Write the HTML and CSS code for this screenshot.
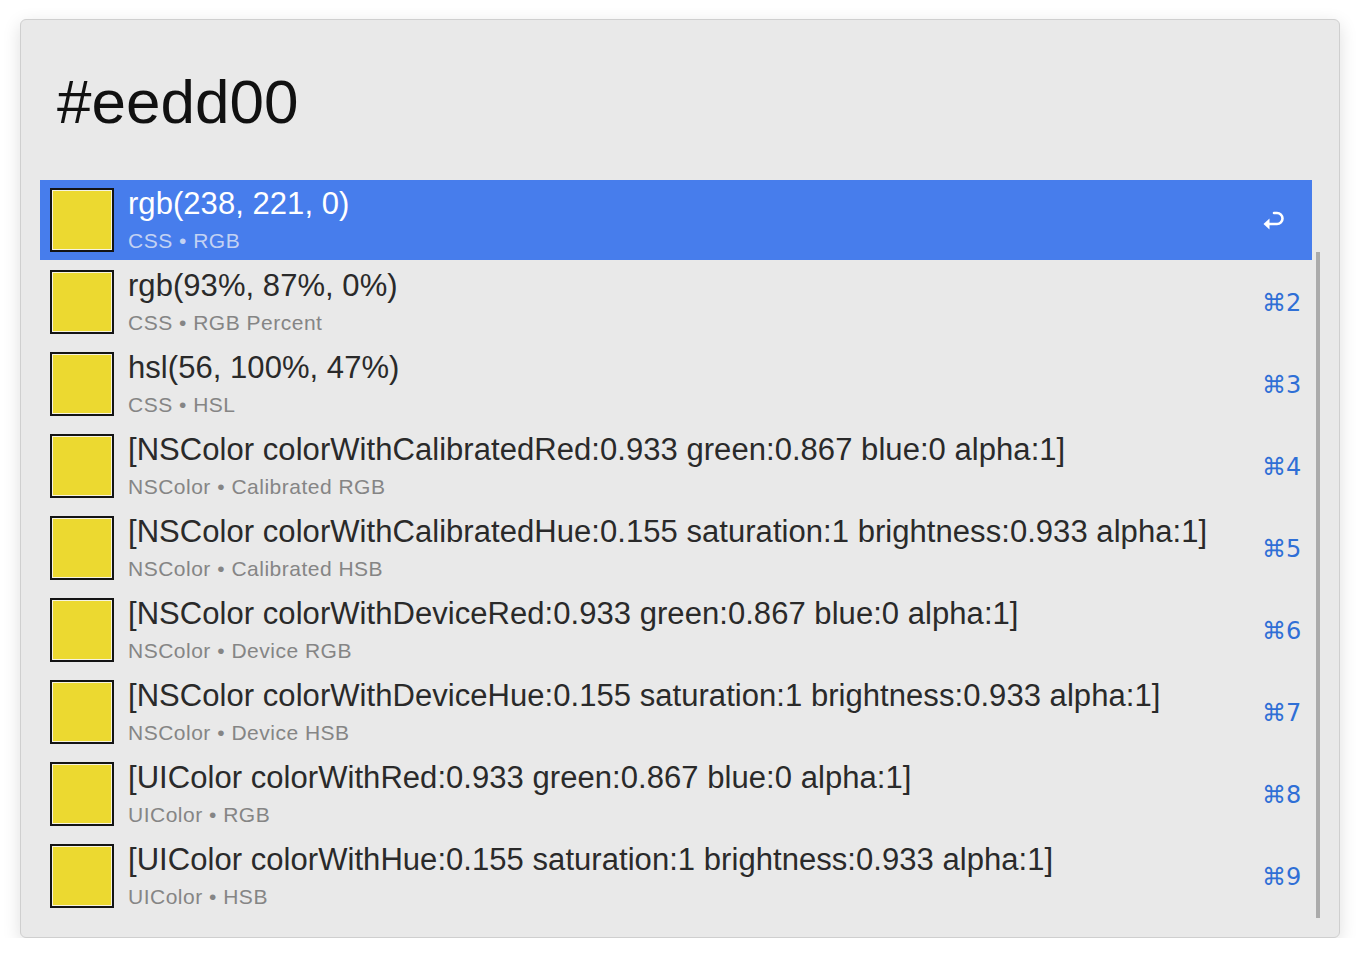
FILE: index.html
```html
<!DOCTYPE html>
<html>
<head>
<meta charset="utf-8">
<link rel="stylesheet" href="styles.css">
</head>
<body>
<div class="window">
  <div class="query">#eedd00</div>
  <div class="list">
    <div class="row selected">
      <div class="swatch"></div>
      <div class="text"><div class="title">rgb(238, 221, 0)</div><div class="sub">CSS • RGB</div></div>
      <div class="key"><svg width="24" height="22" viewBox="0 0 24 22"><path d="M5 15 H15 A5.5 5.5 0 0 0 15 4 H12" fill="none" stroke="#fff" stroke-width="2.6" stroke-linecap="round"/><path d="M1.5 15 L7.5 9.5 L7.5 20.5 Z" fill="#fff"/></svg></div>
    </div>
    <div class="row">
      <div class="swatch"></div>
      <div class="text"><div class="title">rgb(93%, 87%, 0%)</div><div class="sub">CSS • RGB Percent</div></div>
      <div class="key">⌘2</div>
    </div>
    <div class="row">
      <div class="swatch"></div>
      <div class="text"><div class="title">hsl(56, 100%, 47%)</div><div class="sub">CSS • HSL</div></div>
      <div class="key">⌘3</div>
    </div>
    <div class="row">
      <div class="swatch"></div>
      <div class="text"><div class="title">[NSColor colorWithCalibratedRed:0.933 green:0.867 blue:0 alpha:1]</div><div class="sub">NSColor • Calibrated RGB</div></div>
      <div class="key">⌘4</div>
    </div>
    <div class="row">
      <div class="swatch"></div>
      <div class="text"><div class="title">[NSColor colorWithCalibratedHue:0.155 saturation:1 brightness:0.933 alpha:1]</div><div class="sub">NSColor • Calibrated HSB</div></div>
      <div class="key">⌘5</div>
    </div>
    <div class="row">
      <div class="swatch"></div>
      <div class="text"><div class="title">[NSColor colorWithDeviceRed:0.933 green:0.867 blue:0 alpha:1]</div><div class="sub">NSColor • Device RGB</div></div>
      <div class="key">⌘6</div>
    </div>
    <div class="row">
      <div class="swatch"></div>
      <div class="text"><div class="title">[NSColor colorWithDeviceHue:0.155 saturation:1 brightness:0.933 alpha:1]</div><div class="sub">NSColor • Device HSB</div></div>
      <div class="key">⌘7</div>
    </div>
    <div class="row">
      <div class="swatch"></div>
      <div class="text"><div class="title">[UIColor colorWithRed:0.933 green:0.867 blue:0 alpha:1]</div><div class="sub">UIColor • RGB</div></div>
      <div class="key">⌘8</div>
    </div>
    <div class="row">
      <div class="swatch"></div>
      <div class="text"><div class="title">[UIColor colorWithHue:0.155 saturation:1 brightness:0.933 alpha:1]</div><div class="sub">UIColor • HSB</div></div>
      <div class="key">⌘9</div>
    </div>
    <div class="scrollbar"></div>
  </div>
</div>
</body>
</html>
```
FILE: styles.css
```css
html, body {
  margin: 0;
  padding: 0;
  background: #ffffff;
}
body {
  padding: 19px 20px 0 20px;
  font-family: "Liberation Sans", Arial, sans-serif;
}
.window {
  box-sizing: border-box;
  width: 1320px;
  height: 919px;
  background: #e9e9e9;
  border: 1px solid #cfcfcf;
  border-radius: 6px;
  box-shadow: 0 5px 18px rgba(0,0,0,0.13);
  padding: 0 27px 0 19px;
}
.query {
  height: 160px;
  box-sizing: border-box;
  padding: 47px 0 0 17px;
  font-size: 62px;
  line-height: 70px;
  color: #111;
  font-weight: 400;
}
.list {
  position: relative;
}
.row {
  display: flex;
  align-items: flex-start;
  height: 82px;
  box-sizing: border-box;
  padding: 8px 0 0 10px;
}
.row.selected {
  background: #477dec;
  height: 80px;
  margin-bottom: 2px;
}
.swatch {
  width: 64px;
  height: 64px;
  box-sizing: border-box;
  border: 2px solid #141414;
  background: #ecd930;
  box-shadow: inset 0 0 0 1px #f6f3e0;
  flex: none;
}
.text {
  flex: 1;
  padding-left: 14px;
  min-width: 0;
}
.title {
  font-size: 31px;
  line-height: 32px;
  color: #2a2a2a;
  white-space: nowrap;
  letter-spacing: 0.05px;
}
.sub {
  font-size: 21px;
  line-height: 24px;
  margin-top: 9px;
  color: #858585;
  letter-spacing: 0.5px;
}
.selected .title { color: #ffffff; }
.selected .sub { color: #c3d2f3; }
.key {
  flex: none;
  width: 50px;
  align-self: center;
  margin-top: -8px;
  font-family: "DejaVu Sans", "Liberation Sans", sans-serif;
  font-size: 24px;
  color: #2f6fd6;
  text-align: left;
}
.selected .key {
  padding-top: 6px;
}
.scrollbar {
  position: absolute;
  left: 1276px;
  top: 72px;
  width: 4px;
  height: 666px;
  background: #ababab;
}
```
